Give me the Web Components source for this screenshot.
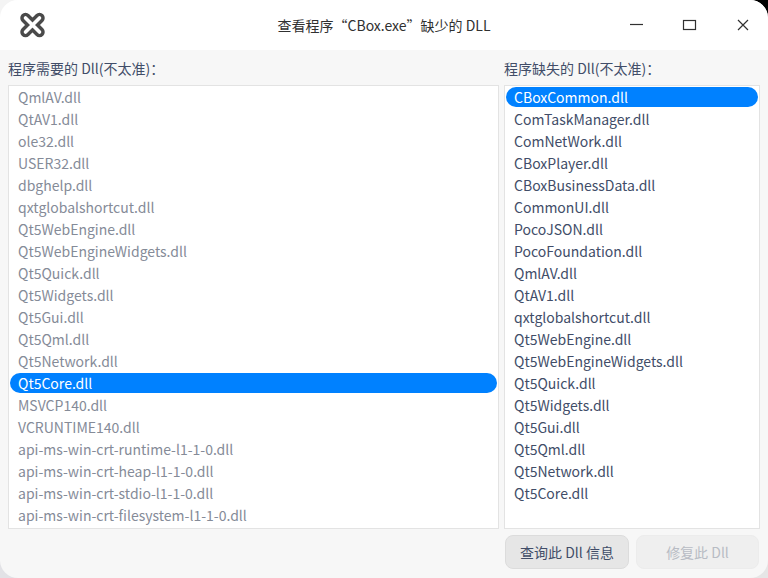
<!DOCTYPE html>
<html>
<head>
<meta charset="utf-8">
<style>
  html, body { margin: 0; padding: 0; width: 768px; height: 578px; overflow: hidden; }
  body {
    font-family: "Noto Sans CJK SC", "Noto Sans", sans-serif; font-size: 14px; color: #414d68;
    /* whatever was behind the window shows in its four corners */
    background:
      linear-gradient(#000, #000) right top / 20px 20px no-repeat,
      linear-gradient(#f4f4f4, #f4f4f4) left top / 20px 20px no-repeat,
      linear-gradient(#e2e2e6, #e2e2e6) left bottom / 20px 20px no-repeat,
      linear-gradient(#e6e6e6, #e6e6e6) right bottom / 20px 20px no-repeat;
  }
</style>
</head>
<body>
<dll-window window-title="查看程序“CBox.exe”缺少的 DLL">
  <dll-pane slot="left" label="程序需要的 Dll(不太准)：" selected="Qt5Core.dll" muted
    items="QmlAV.dll,QtAV1.dll,ole32.dll,USER32.dll,dbghelp.dll,qxtglobalshortcut.dll,Qt5WebEngine.dll,Qt5WebEngineWidgets.dll,Qt5Quick.dll,Qt5Widgets.dll,Qt5Gui.dll,Qt5Qml.dll,Qt5Network.dll,Qt5Core.dll,MSVCP140.dll,VCRUNTIME140.dll,api-ms-win-crt-runtime-l1-1-0.dll,api-ms-win-crt-heap-l1-1-0.dll,api-ms-win-crt-stdio-l1-1-0.dll,api-ms-win-crt-filesystem-l1-1-0.dll"></dll-pane>
  <dll-pane slot="right" label="程序缺失的 Dll(不太准)：" selected="CBoxCommon.dll"
    items="CBoxCommon.dll,ComTaskManager.dll,ComNetWork.dll,CBoxPlayer.dll,CBoxBusinessData.dll,CommonUI.dll,PocoJSON.dll,PocoFoundation.dll,QmlAV.dll,QtAV1.dll,qxtglobalshortcut.dll,Qt5WebEngine.dll,Qt5WebEngineWidgets.dll,Qt5Quick.dll,Qt5Widgets.dll,Qt5Gui.dll,Qt5Qml.dll,Qt5Network.dll,Qt5Core.dll"></dll-pane>
  <dll-button slot="actions">查询此 Dll 信息</dll-button>
  <dll-button slot="actions" disabled>修复此 Dll</dll-button>
</dll-window>

<script>
const windowTemplate = document.createElement('template');
windowTemplate.innerHTML = `
  <style>
    :host { display: flex; flex-direction: column; width: 768px; height: 578px; background: #f7f7f7; border-radius: 18px; overflow: hidden; }
    header { flex: none; height: 50px; background: #fff; display: grid; grid-template-columns: 1fr auto 1fr; align-items: center; }
    .logo { display: block; margin-left: 19px; width: 27px; height: 27px; }
    h1 { margin: 0 0 1px; font-size: 14px; font-weight: 400; color: #303030; white-space: nowrap; }
    .controls { display: flex; justify-content: flex-end; }
    .controls svg { display: block; flex: none; width: 53px; height: 50px; }
    main { flex: 1; display: flex; flex-direction: column; padding: 8px 8px 9px 8px; min-height: 0; }
    .panes { flex: 1; display: flex; gap: 5px; min-height: 0; }
    .panes ::slotted([slot=left]) { width: 491px; flex: none; }
    .panes ::slotted([slot=right]) { width: 256px; flex: none; }
    .actions { flex: none; display: flex; justify-content: flex-end; gap: 7px; margin-top: 6px; padding-right: 1px; }
  </style>
  <header>
    <svg class="logo" viewBox="0 0 27 27">
      <path d="M6.5 6 L20.5 20 M20.5 6 L6.5 20" fill="none" stroke="#4a4a4a" stroke-width="10.5" stroke-linecap="round"/>
      <path d="M6.5 6 L20.5 20 M20.5 6 L6.5 20" fill="none" stroke="#fff" stroke-width="3.6" stroke-linecap="round"/>
    </svg>
    <h1></h1>
    <div class="controls">
      <svg viewBox="0 0 53 50"><path d="M21 24.5h13" stroke="#303030" stroke-width="1.2" fill="none"/></svg>
      <svg viewBox="0 0 53 50"><rect x="21.5" y="20.5" width="12" height="9" stroke="#303030" stroke-width="1.2" fill="none"/></svg>
      <svg viewBox="0 0 53 50"><path d="M23 20l10 10M33 20l-10 10" stroke="#303030" stroke-width="1.2" fill="none"/></svg>
    </div>
  </header>
  <main>
    <div class="panes"><slot name="left"></slot><slot name="right"></slot></div>
    <div class="actions"><slot name="actions"></slot></div>
  </main>
`;

class DllWindow extends HTMLElement {
  constructor() {
    super();
    this.attachShadow({ mode: 'open' });
    this.shadowRoot.appendChild(windowTemplate.content.cloneNode(true));
    this.shadowRoot.querySelector('h1').textContent = this.getAttribute('window-title');
  }
}

const paneTemplate = document.createElement('template');
paneTemplate.innerHTML = `
  <style>
    :host { display: flex; flex-direction: column; min-height: 0; }
    label { flex: none; height: 20px; line-height: 20px; font-size: 14px; color: #414d68; }
    ul { flex: 1; display: flex; flex-direction: column; gap: 2px; margin: 7px 0 0; padding: 1px; list-style: none; background: #fff; border: 1px solid #e3e3e3; overflow: hidden; min-height: 0; }
    li { flex: none; height: 20px; line-height: 20px; padding-left: 8px; border-radius: 10px; color: #414d68; white-space: nowrap; }
    :host([muted]) li { color: #858b98; }
    li.on, :host([muted]) li.on { background: #0081ff; color: #fff; }
  </style>
  <label></label>
  <ul></ul>
`;

class DllPane extends HTMLElement {
  constructor() {
    super();
    this.attachShadow({ mode: 'open' });
    this.shadowRoot.appendChild(paneTemplate.content.cloneNode(true));
    this.shadowRoot.querySelector('label').textContent = this.getAttribute('label');
    const list = this.shadowRoot.querySelector('ul');
    for (const name of this.getAttribute('items').split(',')) {
      const li = document.createElement('li');
      li.textContent = name;
      if (name === this.getAttribute('selected')) li.className = 'on';
      list.appendChild(li);
    }
  }
}

const buttonTemplate = document.createElement('template');
buttonTemplate.innerHTML = `
  <style>
    :host { display: block; width: 124px; height: 34px; box-sizing: border-box; line-height: 32px; text-align: center; font-size: 14px; border-radius: 8px; color: #414d68; background: #e6e6e6; border: 1px solid #dcdcdc; }
    :host([disabled]) { width: 123px; color: #b8bcc4; background: #efefef; border-color: #ececec; }
  </style>
  <slot></slot>
`;

class DllButton extends HTMLElement {
  constructor() {
    super();
    this.attachShadow({ mode: 'open' });
    this.shadowRoot.appendChild(buttonTemplate.content.cloneNode(true));
  }
}

customElements.define('dll-window', DllWindow);
customElements.define('dll-pane', DllPane);
customElements.define('dll-button', DllButton);
</script>
</body>
</html>
